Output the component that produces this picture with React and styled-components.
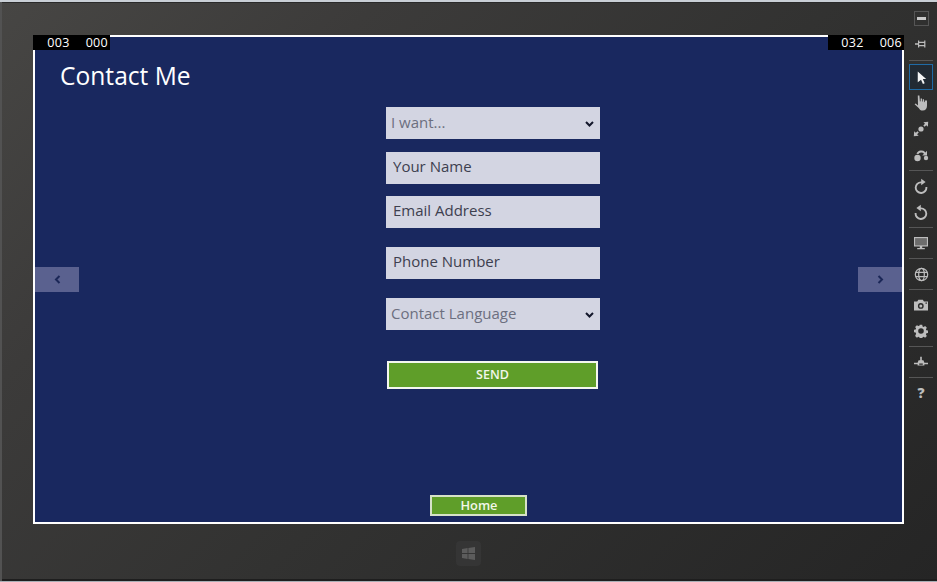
import styled, { createGlobalStyle } from 'styled-components'

const GlobalStyle = createGlobalStyle`
  html, body {
    margin: 0;
    padding: 0;
    height: 100%;
    overflow: hidden;
    background: #2a2a2a;
  }
  * {
    box-sizing: border-box;
  }
`

const Page = styled.div`
  width: 937px;
  height: 582px;
  display: flex;
  flex-direction: column;
  font-family: "Open Sans", "Noto Sans", sans-serif;
`

const WindowEdge = styled.div`
  height: ${props => props.size}px;
  flex: none;
  background: ${props => props.color};
`

const Device = styled.div`
  flex: 1;
  display: flex;
  background: linear-gradient(135deg, #474644 0%, #3c3b3a 25%, #323231 55%, #252525 100%);
  box-shadow: inset 2px 0 0 #525252, inset 0 1px 0 #2a2a2a, inset 0 -2px 0 #1e1e1e;
`

const Stage = styled.div`
  width: 904px;
  padding: 33px 0 0 33px;
  display: flex;
  flex-direction: column;
  align-items: center;
`

const Screen = styled.main`
  position: relative;
  width: 871px;
  height: 489px;
  flex: none;
  display: flex;
  flex-direction: column;
  border: 2px solid #fff;
  background: #19285f;
`

const Counter = styled.div`
  position: absolute;
  top: -2px;
  ${props => (props.side === 'left' ? 'left: -2px;' : 'right: -2px;')}
  width: ${props => props.width}px;
  height: 15px;
  padding-right: 2px;
  display: flex;
  justify-content: flex-end;
  gap: 16px;
  background: #000;
  color: #fff;
  font-size: 12.5px;
  line-height: 15px;
  letter-spacing: 0.3px;
`

const Title = styled.h1`
  margin: 0;
  padding: 22px 0 0 25px;
  height: 64px;
  flex: none;
  color: #fff;
  font-size: 24.6px;
  font-weight: 400;
  line-height: 34px;
`

const Form = styled.form`
  width: 214px;
  margin-left: 351px;
  display: flex;
  flex-direction: column;
`

const SelectWrap = styled.div`
  position: relative;
  height: 32px;
  margin-top: ${props => props.top}px;
`

const Select = styled.select`
  appearance: none;
  display: block;
  width: 100%;
  height: 100%;
  padding: 0 0 2px 5px;
  border: 0;
  border-radius: 0;
  background: #d3d5e2;
  color: #6c6f7f;
  font-family: inherit;
  font-size: 15px;
`

const Chevron = styled.svg`
  position: absolute;
  top: 14px;
  right: 6px;
  pointer-events: none;
`

const Field = styled.input`
  display: block;
  width: 100%;
  height: 32px;
  margin-top: ${props => props.top}px;
  padding: 0 0 4px 7px;
  border: 0;
  border-radius: 0;
  background: #d3d5e2;
  color: #3d404f;
  font-family: inherit;
  font-size: 15px;

  &::placeholder {
    color: #3d404f;
    opacity: 1;
  }
`

const GreenButton = styled.button`
  display: block;
  border-radius: 0;
  border-style: solid;
  border-width: 2px;
  background: #5f9e29;
  color: #f2f7ea;
  font-family: inherit;
  font-weight: 600;
`

const SendButton = styled(GreenButton)`
  width: 211px;
  height: 28px;
  margin: 31px 0 0 1px;
  padding: 0 0 2px;
  border-color: #f4f7f0;
  font-size: 12.5px;
`

const Footer = styled.div`
  margin-top: auto;
  padding: 0 0 6px 395px;
`

const HomeButton = styled(GreenButton)`
  width: 97px;
  height: 21px;
  padding: 0 0 0 1px;
  border-color: #d6e2c8;
  font-size: 12.8px;
  line-height: 15px;
`

const PageArrow = styled.button`
  position: absolute;
  top: 230px;
  ${props => (props.side === 'left' ? 'left: 0;' : 'right: 0;')}
  width: 44px;
  height: 25px;
  padding: 0;
  display: flex;
  align-items: center;
  justify-content: center;
  border: 0;
  background: #5a618f;
  color: #1b2757;
`

const HomeKey = styled.div`
  width: 25px;
  height: 25px;
  margin-top: 17px;
  flex: none;
  display: flex;
  align-items: center;
  justify-content: center;
  border-radius: 4px;
  background: #353535;
`

const Toolbar = styled.aside`
  width: 33px;
  padding: 3px 4px 0 5px;
  display: flex;
  flex-direction: column;
  align-items: stretch;
`

const Tool = styled.div`
  height: 26px;
  flex: none;
  display: flex;
  align-items: center;
  justify-content: center;
  color: #bdbdbd;
  ${props => props.selected && `
    border: 1px solid #1f6aa5;
    background: #222a33;
    color: #f4f4f4;
  `}
`

const MinimizeBox = styled.div`
  width: 15px;
  height: 15px;
  display: flex;
  align-items: center;
  justify-content: center;
  border: 1px solid #555;
`

const MinimizeBar = styled.div`
  width: 9px;
  height: 3px;
  background: #c8c8c8;
`

const Separator = styled.hr`
  height: 1px;
  flex: none;
  margin: ${props => props.before ?? 2}px 0 ${props => props.after ?? 2}px;
  border: 0;
  background: #565656;
`

const Icon = ({ children, size = 16 }) => (
  <svg width={size} height={size} viewBox="0 0 16 16" fill="currentColor">{children}</svg>
)

const PinIcon = () => (
  <Icon>
    <path d="M2 7.2h3V4.5h1.2v1.2h5V4.5h1.2v7H11.2v-1.2h-5v1.2H5V8.8H2zM6.2 7v2h5V7z" />
  </Icon>
)

const CursorIcon = () => (
  <Icon size={15}>
    <path d="M4 1.5l9 8.2H9.4l2 4.3-1.9.9-2-4.4L4 13z" />
  </Icon>
)

const HandIcon = () => (
  <Icon>
    <path d="M4.8.6h1.6l.5 5.8.7-.1V3.5h1.4v3l.7.1V4.3h1.3v2.8l.7.2V5.5H14v5.3c0 2.8-1.6 4.8-4.2 4.8-2.1 0-3.2-1-4.1-2.6L1.6 9.3l1.1-.9 2.3 2.2z" />
  </Icon>
)

const PinchIcon = () => (
  <Icon>
    <circle cx="8" cy="8" r="2.6" />
    <path d="M15.2.8l-.3 5-1.6-1.6-1.7 1.6-1.3-1.4 1.7-1.6-1.6-1.6zM.8 15.2l.4-5 1.6 1.6 1.7-1.6 1.3 1.4-1.7 1.6 1.6 1.6z" />
  </Icon>
)

const TwoFingerIcon = () => (
  <Icon>
    <circle cx="4.5" cy="11" r="3.2" />
    <circle cx="13" cy="11" r="2.2" />
    <path d="M3.4 6.5A5.4 5.4 0 0 1 12.4 5.4L14 3.8V8.6H9.2l1.8-1.8A3.5 3.5 0 0 0 5.2 7.2z" />
  </Icon>
)

const RotateCwIcon = () => (
  <Icon>
    <path d="M8.2 3.4V.8l4.4 3.3-4.4 3.2V5.2A4.4 4.4 0 1 0 12.4 9h1.9A6.3 6.3 0 1 1 8.2 3.4z" />
  </Icon>
)

const RotateCcwIcon = () => (
  <Icon>
    <path d="M7.8 3.4V.8L3.4 4.1l4.4 3.2V5.2A4.4 4.4 0 1 1 3.6 9H1.7A6.3 6.3 0 1 0 7.8 3.4z" />
  </Icon>
)

const MonitorIcon = () => (
  <Icon>
    <path d="M1 2h14v9.5H9.2v1.6h2.6v1.2H4.2v-1.2h2.6v-1.6H1zm1.2 1.2v7.1h11.6V3.2z" />
    <path d="M2.2 3.2h11.6v7.1H2.2z" opacity="0.45" />
  </Icon>
)

const GlobeIcon = () => (
  <svg width="15" height="15" viewBox="0 0 16 16" fill="none" stroke="currentColor" strokeWidth="1.3">
    <circle cx="8" cy="8" r="6.6" />
    <ellipse cx="8" cy="8" rx="3" ry="6.6" />
    <path d="M2 5.8h12M2 10.2h12" />
  </svg>
)

const CameraIcon = () => (
  <Icon>
    <path fillRule="evenodd" d="M1 4.5h3.2L5.4 2.8h4.4l1.2 1.7H15v9H1zM7.8 6a2.9 2.9 0 1 0 0 5.8 2.9 2.9 0 0 0 0-5.8zM12.5 5.6v1.2h1.4V5.6z" />
    <circle cx="7.8" cy="8.9" r="1.5" />
  </Icon>
)

const GearIcon = () => (
  <Icon size={14}>
    <path fillRule="evenodd" d="M6.6.8h2.8l.4 2 1.2.5 1.7-1.1 2 2-1.1 1.7.5 1.2 2 .4v2.8l-2 .4-.5 1.2 1.1 1.7-2 2-1.7-1.1-1.2.5-.4 2H6.6l-.4-2-1.2-.5-1.7 1.1-2-2L2.4 11l-.5-1.2-2-.4V6.6l2-.4L2.4 5 1.3 3.3l2-2L5 2.4l1.2-.5zM8 4.8a3.2 3.2 0 1 0 0 6.4 3.2 3.2 0 0 0 0-6.4z" />
  </Icon>
)

const NetworkIcon = () => (
  <Icon>
    <path fillRule="evenodd" d="M7.2 2.8h1.6v3.4h1.6l1 2.6H15v1.4h-3.6v1.4H4.6v-1.4H1V8.8h3.6l1-2.6h1.6zM6.2 9.6v1.2h3.6V9.6z" />
  </Icon>
)

const HelpMark = styled.span`
  font-size: 14px;
  font-weight: 800;
  line-height: 16px;
`

const tools = [
  [<MinimizeBox key="m"><MinimizeBar /></MinimizeBox>, <PinIcon key="p" />],
  [<CursorIcon key="c" />, <HandIcon key="h" />, <PinchIcon key="z" />, <TwoFingerIcon key="t" />],
  [<RotateCwIcon key="r" />, <RotateCcwIcon key="l" />],
  [<MonitorIcon key="d" />],
  [<GlobeIcon key="g" />],
  [<CameraIcon key="s" />, <GearIcon key="o" />],
  [<NetworkIcon key="n" />],
  [<HelpMark key="q">?</HelpMark>],
]

const SelectField = ({ top, label }) => (
  <SelectWrap top={top}>
    <Select defaultValue={label} aria-label={label}>
      <option>{label}</option>
    </Select>
    <Chevron width="9" height="6" viewBox="0 0 9 6" fill="none" stroke="#14182c" strokeWidth="2">
      <path d="M1 1l3.5 3.5L8 1" />
    </Chevron>
  </SelectWrap>
)

const App = () => (
  <Page>
    <GlobalStyle />
    <WindowEdge color="#c9cfd6" size={2} />
    <Device>
      <Stage>
        <Screen>
          <Counter side="left" width={77}>
            <span>003</span>
            <span>000</span>
          </Counter>
          <Counter side="right" width={76}>
            <span>032</span>
            <span>006</span>
          </Counter>
          <Title>Contact Me</Title>
          <Form onSubmit={e => e.preventDefault()}>
            <SelectField top={6} label="I want..." />
            <Field top={13} placeholder="Your Name" />
            <Field top={12} placeholder="Email Address" />
            <Field top={19} placeholder="Phone Number" />
            <SelectField top={19} label="Contact Language" />
            <SendButton>SEND</SendButton>
          </Form>
          <Footer>
            <HomeButton>Home</HomeButton>
          </Footer>
          <PageArrow side="left" aria-label="Previous">
            <svg width="7" height="9" viewBox="0 0 7 9" fill="none" stroke="currentColor" strokeWidth="2">
              <path d="M5.5 1L2 4.5 5.5 8" />
            </svg>
          </PageArrow>
          <PageArrow side="right" aria-label="Next">
            <svg width="7" height="9" viewBox="0 0 7 9" fill="none" stroke="currentColor" strokeWidth="2">
              <path d="M1.5 1L5 4.5 1.5 8" />
            </svg>
          </PageArrow>
        </Screen>
        <HomeKey>
          <svg width="15" height="15" viewBox="0 0 15 15" fill="#5c5c5c">
            <path d="M1 3l5.6-.9v5H1zM7.4 2L14 1v6.1H7.4zM1 8h5.6v5L1 12.1zM7.4 8H14v6l-6.6-1z" />
          </svg>
        </HomeKey>
      </Stage>
      <Toolbar>
        {tools.map((group, g) => (
          <div key={g}>
            {g > 0 && <Separator before={g === 1 ? 3 : 2} after={g === 1 ? 3 : 2} />}
            {group.map((icon, i) => (
              <Tool key={i} selected={g === 1 && i === 0}>{icon}</Tool>
            ))}
          </div>
        ))}
      </Toolbar>
    </Device>
    <WindowEdge color="#a9afb6" size={1} />
  </Page>
)

export default App
